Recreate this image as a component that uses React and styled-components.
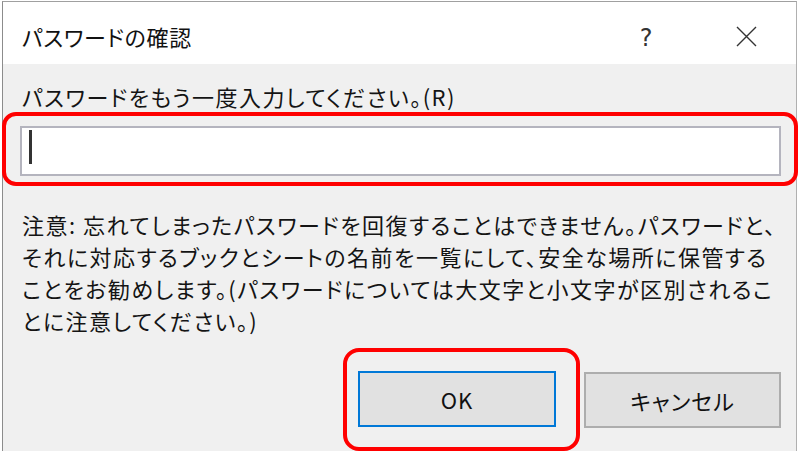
import React from "react";
import styled, { createGlobalStyle } from "styled-components";

const GlobalStyle = createGlobalStyle`
  html, body {
    margin: 0;
    padding: 0;
    background: #ffffff;
  }
  body {
    font-family: "Noto Sans CJK JP", "Noto Sans", sans-serif;
    color: #141414;
  }
`;

const Window = styled.div`
  box-sizing: border-box;
  margin: 1px 0 0 2px;
  width: 795px;
  height: 450px;
  border-left: 1.5px solid #8c8c8c;
  border-top: 1px solid #a0a0a0;
  border-right: 1px solid #b0b0b0;
  display: flex;
  flex-direction: column;
`;

const TitleBar = styled.div`
  box-sizing: border-box;
  height: 66px;
  background: #ffffff;
  display: flex;
  align-items: flex-start;
  padding: 18px 0 0 19px;
`;

const Title = styled.div`
  flex: 1;
  font-size: 22px;
  line-height: 32px;
  font-feature-settings: "palt";
  letter-spacing: 0.7px;
  color: #111;
`;

const TitleButton = styled.div`
  width: 100px;
  height: 32px;
  display: flex;
  align-items: center;
  justify-content: center;
  margin-top: ${(p) => p.offset || 0}px;
  font-family: "DejaVu Sans", sans-serif;
  font-size: 24px;
  color: #333;
`;

const Body = styled.div`
  flex: 1;
  background: #f0f0f0;
  display: flex;
  flex-direction: column;
`;

const Label = styled.div`
  padding: 16px 0 0 19px;
  font-size: 22px;
  line-height: 32px;
  font-feature-settings: "palt";
  letter-spacing: 1.5px;
`;

const FieldFrame = styled.div`
  box-sizing: border-box;
  margin-left: -1px;
  width: 796px;
  border: 4px solid #ff0000;
  border-radius: 14px;
  padding: 10px 13px 6px 14px;
`;

const Field = styled.div`
  box-sizing: border-box;
  height: 50px;
  background: #ffffff;
  border: 2px solid #b4b4be;
  padding: 2px 7px;
`;

const Caret = styled.div`
  width: 2.5px;
  height: 34px;
  background: #333;
`;

const Note = styled.div`
  margin-top: 22px;
  padding-left: 19px;
  font-size: 22px;
  line-height: 32px;
  font-feature-settings: "palt";
  letter-spacing: 1.5px;
  white-space: nowrap;
`;

const ButtonRow = styled.div`
  margin-top: 12px;
  display: flex;
  justify-content: flex-end;
  align-items: center;
  gap: 4px;
  padding-right: 15px;
`;

const ButtonFrame = styled.div`
  box-sizing: border-box;
  height: 103px;
  border: 4px solid #ff0000;
  border-radius: 16px;
  padding: 19px 20px 0 11px;
`;

const Button = styled.div`
  box-sizing: border-box;
  width: ${(p) => p.w}px;
  height: 56px;
  background: #e1e1e1;
  border: 2px solid ${(p) => (p.primary ? "#0078d7" : "#adadad")};
  display: flex;
  align-items: center;
  justify-content: center;
  font-size: 22px;
  font-feature-settings: "palt";
  letter-spacing: 1px;
  color: #111;
`;

export default function App() {
  return (
    <>
      <GlobalStyle />
      <Window>
        <TitleBar>
          <Title>パスワードの確認</Title>
          <TitleButton offset={2}>?</TitleButton>
          <TitleButton>
            <svg width="21" height="21" viewBox="0 0 21 21">
              <path d="M1 1 L20 20 M20 1 L1 20" stroke="#333" strokeWidth="1.4" fill="none" />
            </svg>
          </TitleButton>
        </TitleBar>
        <Body>
          <Label>パスワードをもう一度入力してください。(R)</Label>
          <FieldFrame>
            <Field>
              <Caret />
            </Field>
          </FieldFrame>
          <Note>
            注意: 忘れてしまったパスワードを回復することはできません。パスワードと、
            <br />
            それに対応するブックとシートの名前を一覧にして、安全な場所に保管する
            <br />
            ことをお勧めします。(パスワードについては大文字と小文字が区別されるこ
            <br />
            とに注意してください。)
          </Note>
          <ButtonRow>
            <ButtonFrame>
              <Button primary w={198}>OK</Button>
            </ButtonFrame>
            <Button w={197}>キャンセル</Button>
          </ButtonRow>
        </Body>
      </Window>
    </>
  );
}
